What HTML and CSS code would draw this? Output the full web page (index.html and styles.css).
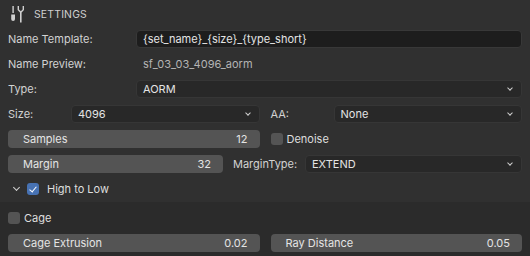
FILE: index.html
```html
<!DOCTYPE html>
<html lang="en">

<head>
    <meta charset="UTF-8">
    <meta name="viewport" content="width=device-width, initial-scale=1.0">
    <title>Bake settings</title>
    <link rel="stylesheet" href="styles.css">
</head>

<body>
    <div class="panel">
        <div class="head">
            <svg class="tool-icon" width="16" height="18" viewBox="0 0 16 18">
                <rect x="3.4" y="1" width="1.4" height="7" fill="#d0d0d0" />
                <path d="M2.2 9.5 h3.8 v4.5 a1.9 1.9 0 0 1 -3.8 0 z" fill="#d0d0d0" />
                <path d="M8.6 1 v4 l2.4 2.6 v10 h1.6 v-10 l2.4 -2.6 v-4 h-1.4 v3.4 l-1.8 1.8 l-1.8 -1.8 v-3.4 z" fill="#d0d0d0" />
            </svg>
            <span>SETTINGS</span>
        </div>

        <div class="section">
            <div class="row">
                <span class="label">Name Template:</span>
                <div class="field text">{set_name}_{size}_{type_short}</div>
            </div>
            <div class="row">
                <span class="label">Name Preview:</span>
                <span class="preview">sf_03_03_4096_aorm</span>
            </div>
            <div class="row">
                <span class="label">Type:</span>
                <div class="field menu">AORM<span class="chev"></span></div>
            </div>
            <div class="row split">
                <div class="half">
                    <span class="label short">Size:</span>
                    <div class="field menu">4096<span class="chev"></span></div>
                </div>
                <div class="half">
                    <span class="label short">AA:</span>
                    <div class="field menu">None<span class="chev"></span></div>
                </div>
            </div>
            <div class="row split">
                <div class="slider"><span>Samples</span><span>12</span></div>
                <div class="half">
                    <span class="check"></span>
                    <span class="check-label">Denoise</span>
                </div>
            </div>
            <div class="row">
                <div class="slider margin"><span>Margin</span><span>32</span></div>
                <span class="label mtype">MarginType:</span>
                <div class="field menu">EXTEND<span class="chev"></span></div>
            </div>
            <div class="row toggle">
                <span class="chev open"></span>
                <span class="check on"></span>
                <span class="check-label">High to Low</span>
            </div>
        </div>

        <div class="section sub">
            <div class="row">
                <span class="check"></span>
                <span class="check-label">Cage</span>
            </div>
            <div class="row split">
                <div class="slider"><span>Cage Extrusion</span><span>0.02</span></div>
                <div class="slider"><span>Ray Distance</span><span>0.05</span></div>
            </div>
        </div>
    </div>
</body>

</html>
```

FILE: styles.css
```css
* {
    margin: 0;
    padding: 0;
    box-sizing: border-box;
}

body {
    background-color: #303030;
    font-family: Inter, "Noto Sans", sans-serif;
    font-size: 11px;
    color: #d2d2d2;
}

.panel {
    width: 530px;
    height: 256px;
    display: flex;
    flex-direction: column;
}

.head {
    height: 30px;
    padding: 4px 8px 6px;
    display: flex;
    align-items: center;
    gap: 9px;
    font-size: 10.4px;
    color: #cfcfcf;
    letter-spacing: 0.2px;
}

.tool-icon {
    margin-left: 1px;
}

.section {
    display: flex;
    flex-direction: column;
    gap: 7px;
    padding: 0 8px 4px;
}

.section.sub {
    flex: 1;
    background-color: #2b2b2b;
    padding-top: 7px;
}

.row {
    height: 18px;
    display: flex;
    align-items: center;
}

.row.split {
    display: grid;
    grid-template-columns: 1fr 1fr;
    gap: 11px;
}

.half {
    display: flex;
    align-items: center;
    height: 18px;
}

.label {
    width: 128px;
    flex-shrink: 0;
}

.label.short {
    width: 63px;
}

.label.mtype {
    width: 72px;
}

.preview {
    padding-left: 7px;
    color: #b4b4b4;
}

.field {
    flex: 1;
    height: 18px;
    border-radius: 4px;
    padding: 0 7px;
    display: flex;
    align-items: center;
    color: #e4e4e4;
}

.field.text {
    background-color: #1d1d1d;
    border: 1px solid #383838;
    padding-left: 6px;
}

.field.menu {
    background-color: #282828;
    border: 1px solid #363636;
    padding-left: 6px;
    justify-content: space-between;
}

.chev {
    width: 4px;
    height: 4px;
    border-right: 1.2px solid #d0d0d0;
    border-bottom: 1.2px solid #d0d0d0;
    transform: rotate(45deg);
    margin: -2px 2px 0 0;
}

.slider {
    height: 18px;
    background-color: #545454;
    border-radius: 4px;
    padding: 0 12px 0 15px;
    display: flex;
    align-items: center;
    justify-content: space-between;
    color: #e4e4e4;
}

.slider.margin {
    width: 215px;
    margin-right: 10px;
    flex-shrink: 0;
}

.check {
    width: 12px;
    height: 12px;
    border-radius: 3px;
    background-color: #545454;
    flex-shrink: 0;
    position: relative;
}

.check.on {
    background-color: #4772b3;
}

.check.on::after {
    content: "";
    position: absolute;
    left: 4px;
    top: 1.5px;
    width: 3px;
    height: 6px;
    border-right: 1.6px solid #fff;
    border-bottom: 1.6px solid #fff;
    transform: rotate(40deg);
}

.check-label {
    margin-left: 4px;
    color: #dedede;
}

.toggle .chev.open {
    width: 5px;
    height: 5px;
    margin: -3px 0 0 6px;
}

.toggle .check {
    margin-left: 8px;
}

.toggle .check-label {
    margin-left: 8px;
}
```
